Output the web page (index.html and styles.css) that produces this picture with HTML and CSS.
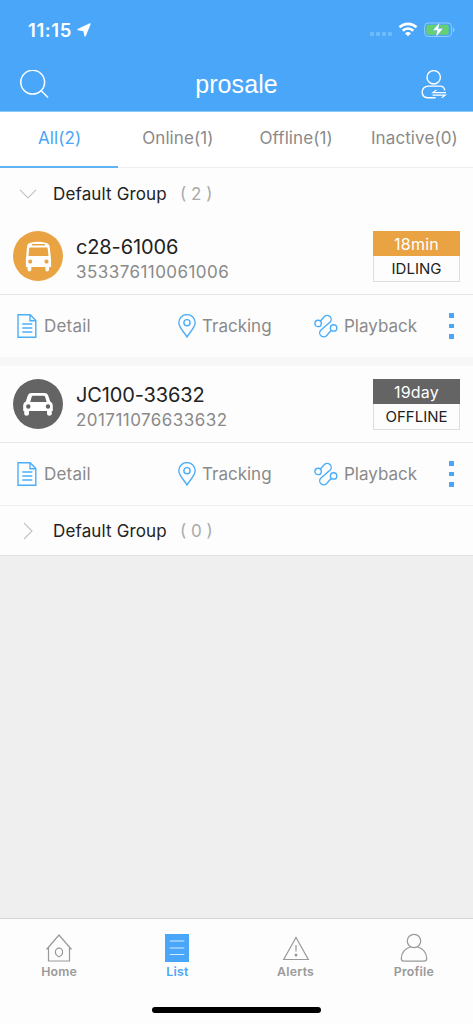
FILE: index.html
```html
<!DOCTYPE html>
<html lang="en">
<head>
<meta charset="utf-8">
<title>prosale</title>
<link rel="stylesheet" href="styles.css">
</head>
<body>
<svg class="defs" width="0" height="0">
  <symbol id="doc" viewBox="0 0 20 24"><path d="M1 .8h12.200l5.600 5.800v16.600H1zM13 .8v6h5.800M5.300 10h10M5.300 14h10M5.300 18h10"/></symbol>
  <symbol id="pin" viewBox="0 0 18 24"><path d="M9 23C6.500 18.500.8 13.500.8 8.800a8.200 8.200 0 0 1 16.400 0C17.200 13.500 11.500 18.500 9 23z"/><circle cx="9" cy="8.700" r="3.100"/></symbol>
  <symbol id="route" viewBox="0 0 24 24"><circle cx="4.100" cy="9.400" r="3.200"/><circle cx="19.600" cy="13.900" r="3.200"/><path d="M6.400 7L10.400 2.500A4 4 0 0 1 16.200 8L6.700 16.200A4 4 0 0 0 12.500 21.700L17.300 16.300"/></symbol>
</svg>
<div class="app">
  <header class="header">
    <div class="status">
      <span class="time">11:15</span>
      <svg class="location" width="14" height="14" viewBox="0 0 14 14"><path d="M13 .9L8.100 13 6.800 7.500.9 6.700z" fill="#fff" stroke="#fff" stroke-width="1.300" stroke-linejoin="round"/></svg>
      <span class="signal"><i></i><i></i><i></i><i></i></span>
      <svg class="wifi" width="20" height="15" viewBox="0 0 20 15"><g fill="none" stroke="#fff" stroke-width="2.600"><path d="M1.500 5.300a12.200 12.200 0 0 1 17 0"/><path d="M4.700 8.700a7.600 7.600 0 0 1 10.600 0"/></g><path d="M10 14.300L7 11.500a4.400 4.400 0 0 1 6 0z" fill="#fff"/></svg>
      <svg class="battery" width="31" height="16" viewBox="0 0 31 16"><rect x=".6" y="1" width="27" height="13.500" rx="3.600" fill="none" stroke="#90caff"/><rect x="2.300" y="2.700" width="22.400" height="10" rx="1.800" fill="#65cf72"/><path d="M29 5.400v4.800c2-.9 2-3.900 0-4.800z" fill="#90caff"/><path d="M15.800.2L8.600 8.400h4.600L11.600 15.400l7.600-8.800h-4.700z" fill="#fff" stroke="#4aa6f8" stroke-width=".4"/></svg>
    </div>
    <div class="titlebar">
      <svg width="30" height="30" viewBox="0 0 30 30" fill="none" stroke="#fff" stroke-width="1.500"><circle cx="12.700" cy="12.200" r="11.900"/><path d="M21 20.500l7 7"/></svg>
      <h1>prosale</h1>
      <svg width="26" height="30" viewBox="0 0 26 30" fill="none" stroke="#fff" stroke-width="1.400"><circle cx="12.700" cy="7.300" r="6.700"/><path d="M23.800 20.400c-.5-3-2.400-4.300-4.800-4.300H7.500c-4 0-6.300 2.600-6.300 6s2.200 5.600 5.500 5.600h8"/><path d="M25 22.600H12l3.500-2.600M11.500 25.200h12.700l-3.500 2.600" stroke-width="1.200"/></svg>
    </div>
  </header>
  <nav class="tabs">
    <a class="tab active">All(2)</a><a class="tab">Online(1)</a><a class="tab">Offline(1)</a><a class="tab">Inactive(0)</a>
  </nav>
  <section class="group">
    <svg width="18" height="18" viewBox="0 0 18 18"><path d="M1 4.800l8 8 8-8"/></svg>
    <span class="group-name">Default Group</span><span class="count">( 2 )</span>
  </section>
  <article class="card">
    <div class="vehicle">
      <svg class="avatar" width="50" height="50" viewBox="0 0 50 50"><circle cx="25" cy="25" r="25" fill="#e9a342"/><path fill="#fff" fill-rule="evenodd" d="M17.500 11.700c4.800-1.200 10.200-1.200 15 0 2.600.6 3.900 1.800 4.200 4l1.100 9.800c.2 1.200.3 2 .3 3.500v7h-2v2.500c0 2.500-3.700 2.500-3.700 0V36H18.300v2.500c0 2.500-3.700 2.500-3.700 0V36h-1.700v-7c0-1.500.1-2.300.3-3.500l.8-9.800c.3-2.200 1-3.400 3.500-4zM19 13v1.500h13V13zM17.300 16.600c-.7 0-1.100.4-1.200 1.100L15.500 25h20l-.8-7.300c-.1-.7-.5-1.100-1.200-1.100zM17.200 28.500a2.100 2.100 0 1 0 0 4.200 2.100 2.100 0 0 0 0-4.200zm16.300 0a2.100 2.100 0 1 0 0 4.200 2.100 2.100 0 0 0 0-4.200z"/></svg>
      <div class="info"><div class="name">c28-61006</div><div class="imei">353376110061006</div></div>
      <div class="state idle"><b>18min</b><span>IDLING</span></div>
    </div>
    <div class="actions">
      <a class="detail"><svg width="20" height="24"><use href="#doc"/></svg><span>Detail</span></a>
      <a class="tracking"><svg width="18" height="24"><use href="#pin"/></svg><span>Tracking</span></a>
      <a class="playback"><svg width="24" height="24"><use href="#route"/></svg><span>Playback</span></a>
      <span class="more"><i></i><i></i><i></i></span>
    </div>
  </article>
  <article class="card second">
    <div class="vehicle">
      <svg class="avatar" width="50" height="50" viewBox="0 0 50 50"><circle cx="25" cy="25" r="25" fill="#646464"/><path fill="#fff" fill-rule="evenodd" d="M19 14h12c2.500 0 3.500.8 4.200 2.600l2 6c1.800.9 2.600 2.400 2.600 4.400v5h-1v2.500c0 3-4.800 3-4.800 0V32H16v2.500c0 3-4.800 3-4.800 0V32h-1v-5c0-2 .8-3.500 2.600-4.400l2-6C15.500 14.800 16.500 14 19 14zM20.200 16.800c-.8 0-1.200.3-1.500 1L17.200 23h16.400l-1.500-5.200c-.3-.7-.7-1-1.500-1zM15.300 25.300a2.200 2.200 0 1 0 0 4.400 2.200 2.200 0 0 0 0-4.400zm19.700 0a2.200 2.200 0 1 0 0 4.400 2.200 2.200 0 0 0 0-4.400z"/></svg>
      <div class="info"><div class="name">JC100-33632</div><div class="imei">201711076633632</div></div>
      <div class="state off"><b>19day</b><span>OFFLINE</span></div>
    </div>
    <div class="actions">
      <a class="detail"><svg width="20" height="24"><use href="#doc"/></svg><span>Detail</span></a>
      <a class="tracking"><svg width="18" height="24"><use href="#pin"/></svg><span>Tracking</span></a>
      <a class="playback"><svg width="24" height="24"><use href="#route"/></svg><span>Playback</span></a>
      <span class="more"><i></i><i></i><i></i></span>
    </div>
  </article>
  <section class="group last">
    <svg width="18" height="18" viewBox="0 0 18 18"><path d="M5 1l8 8-8 8"/></svg>
    <span class="group-name">Default Group</span><span class="count">( 0 )</span>
  </section>
  <footer class="bottom">
    <nav class="bottom-nav">
      <a><svg width="28" height="30" viewBox="0 0 28 30"><path d="M1.500 16.500L14 2l12.500 14.500M3.500 14.300V28h21V14.300M14 23.800c-2-.9-3.600-2.500-3.600-4.800a3.600 3.900 0 0 1 7.200 0c0 2.300-1.600 3.900-3.600 4.800z"/></svg><span>Home</span></a>
      <a class="on"><svg width="28" height="30" viewBox="0 0 28 30"><path fill="#4aa6f8" stroke="none" d="M2 1h24v28H2z"/><path stroke="#d5ebff" d="M6.800 8h14.500M6.800 15h14.500M6.800 21.500h14.500"/></svg><span>List</span></a>
      <a><svg width="28" height="30" viewBox="0 0 28 30"><path d="M14 4.500l12.300 22H1.700zM14 12v6.500"/><circle cx="14" cy="22" r="1.500" fill="#999" stroke="none"/></svg><span>Alerts</span></a>
      <a><svg width="28" height="30" viewBox="0 0 28 30"><circle cx="14" cy="8" r="6.700"/><path d="M10.500 14C5 15.200 1.300 20 1.300 25.500c0 1.800.8 2.700 2.500 2.700h20.400c1.700 0 2.500-.9 2.500-2.700C26.700 20 23 15.200 17.500 14"/></svg><span>Profile</span></a>
    </nav>
    <div class="home-indicator"></div>
  </footer>
</div>
</body>
</html>
```
FILE: styles.css
```css
* { box-sizing: border-box; }
body { margin: 0; font-family: Inter, "Liberation Sans", sans-serif; color: #222; }
.defs { position: absolute; }
svg { display: block; flex: none; }
.app { width: 473px; height: 1024px; display: flex; flex-direction: column; background: #efefef; overflow: hidden; }
.header { height: 111px; background: #4aa6f8; color: #fff; flex: none; }
.status { height: 58px; padding: 1px 18px 0 28px; display: flex; align-items: center; }
.time { font-size: 18.500px; font-weight: 600; letter-spacing: .6px; width: 49px; white-space: nowrap; }
.signal { display: flex; gap: 2px; margin: 9px 6px 0 auto; }
.signal i { width: 4px; height: 4px; border-radius: 1px; background: #6fbcfb; }
.wifi { margin-right: 6px; }
.titlebar { height: 53px; padding: 0 26px 0 20px; display: flex; align-items: center; justify-content: space-between; }
h1 { margin: 0; font: 400 25px "Liberation Sans", sans-serif; letter-spacing: .1px; padding-left: 2px; }
.tabs { height: 57px; display: grid; grid-template-columns: repeat(4, 1fr); background: #fff; border-top: 1px solid #8fc8fb; flex: none; }
.tab { display: flex; justify-content: center; align-items: center; font-size: 17px; letter-spacing: .1px; color: #8a8a8a; border-bottom: 1px solid #eee; padding: 0 0 4px 1px; }
.tab.active { color: #4aa6f8; border-bottom: 2px solid #62b2f8; padding-bottom: 3px; }
.group { height: 50px; background: #fdfdfd; display: flex; align-items: center; padding: 1px 19px 0; flex: none; font-size: 17px; }
.group svg { fill: none; stroke: #c5c5c5; stroke-width: 1.200; }
.group-name { margin-left: 16px; width: 127px; white-space: nowrap; letter-spacing: .14px; }
.count { color: #aaa; white-space: nowrap; }
.group.last { height: 51px; border-top: 1px solid #eee; border-bottom: 1px solid #e2e2e2; padding-top: 0; }
.card { background: #fdfdfd; flex: none; }
.second { border-top: 9px solid #f7f7f7; }
.vehicle { height: 77px; padding: 13px 13px 0; border-bottom: 1px solid #e6e6e6; display: flex; align-items: flex-start; }
.info { margin-left: 13px; flex: 1; white-space: nowrap; padding-top: 3px; }
.name { font-size: 20px; line-height: 26px; letter-spacing: -.13px; }
.imei { font-size: 17px; line-height: 24px; color: #8a8a8a; letter-spacing: .45px; }
.state { width: 87px; height: 51px; border: 1px solid #ddd; text-align: center; display: flex; flex-direction: column; font-size: 16px; }
.state b { margin: -1px -1px 0; height: 25px; line-height: 26px; font-weight: 400; color: #fff; letter-spacing: .25px; }
.state span { line-height: 26px; font-size: 15px; }
.idle b { background: #e9a342; }
.off b { background: #646464; }
.actions { height: 62px; display: grid; grid-template-columns: 161px 136px 133px 1fr; padding-left: 17px; align-items: center; color: #8a8a8a; font-size: 17px; }
.actions a { display: flex; align-items: center; white-space: nowrap; }
.actions svg { fill: none; stroke: #4aaefa; stroke-width: 1.400; }
.detail span { margin-left: 7px; letter-spacing: .2px; }
.tracking span { margin-left: 6px; }
.playback span { margin-left: 6px; }
.more { display: flex; flex-direction: column; gap: 6px; padding-left: 2px; }
.more i { width: 5px; height: 4.500px; background: #4aa6f8; }
.bottom { margin-top: auto; height: 106px; background: #fdfdfd; border-top: 1px solid #d4d4d4; display: flex; flex-direction: column; flex: none; }
.bottom-nav { height: 88px; padding-top: 14px; display: grid; grid-template-columns: repeat(4, 1fr); justify-items: center; align-items: start; }
.bottom-nav a { display: flex; flex-direction: column; align-items: center; color: #999; font-size: 12.300px; font-weight: 600; line-height: 16px; gap: 1px; letter-spacing: .25px; }
.bottom-nav svg { fill: none; stroke: #999; stroke-width: 1.200; }
.bottom-nav .on { color: #4aa6f8; }
.home-indicator { width: 169px; height: 6px; border-radius: 3px; background: #000; margin: 0 auto; }
```
